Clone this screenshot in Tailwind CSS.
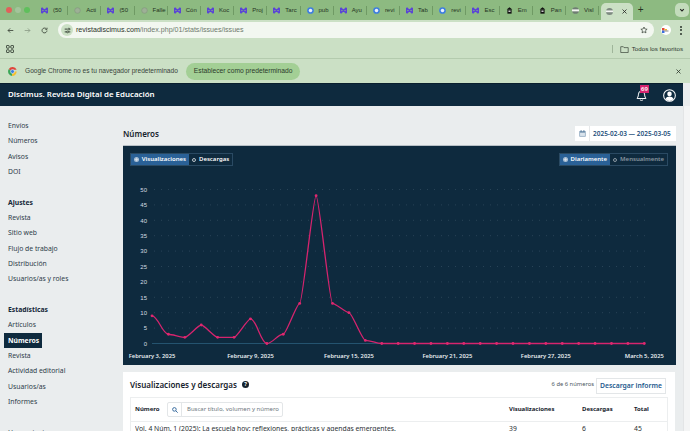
<!DOCTYPE html>
<html lang="es">
<head>
  <meta charset="UTF-8" />
  <title>Números</title>
  <script src="https://cdn.jsdelivr.net/npm/@tailwindcss/browser@4"></script>
</head>
<body class="w-[690px] h-[431px] overflow-hidden bg-[#eaedee] font-['Noto_Sans',sans-serif] text-[#1f2d3a]">

  <!-- Chrome tab strip -->
  <div class="h-[20px] bg-[#8dba81] flex items-center pl-[6px] relative">
    <div class="flex gap-[3px] w-[29px] shrink-0">
      <span class="w-[6px] h-[6px] rounded-full bg-[#e0605a]"></span>
      <span class="w-[6px] h-[6px] rounded-full bg-[#a3c49b]"></span>
      <span class="w-[6px] h-[6px] rounded-full bg-[#5fbf5c]"></span>
    </div>
    <div id="tabs" class="flex h-full items-center shrink-0"></div>
    <div class="w-[32px] h-[17px] mt-[3px] bg-[#cbe0c5] rounded-t-[5px] flex items-center justify-between pl-[5px] pr-[6px] ml-[1.500px] shrink-0">
      <svg class="w-[7px] h-[7px]" viewBox="0 0 10 10"><circle cx="5" cy="5" r="5" fill="#7d8a80"/><rect x="0" y="3.500" width="10" height="2.500" fill="#f4f6f3"/></svg>
      <svg class="w-[5px] h-[5px]" viewBox="0 0 10 10"><path d="M1 1l8 8M9 1l-8 8" stroke="#222" stroke-width="1.600"/></svg>
    </div>
    <span class="ml-[5px] text-[10px] leading-none text-[#26331f] font-['Liberation_Sans',sans-serif]">+</span>
    <div class="absolute right-[1px] top-[3px] w-[14px] h-[14px] rounded-[5px] bg-[#c3dcbc] flex items-center justify-center">
      <svg class="w-[6px] h-[6px]" viewBox="0 0 10 10"><path d="M2 3.500l3 3 3-3" fill="none" stroke="#222" stroke-width="1.800"/></svg>
    </div>
  </div>

  <!-- Toolbar -->
  <div class="h-[20px] bg-[#cbe0c5] flex items-center pl-[7px] pr-[8px] font-['Liberation_Sans',sans-serif]">
    <svg class="w-[7px] h-[7px] mr-[10px]" viewBox="0 0 10 10"><path d="M9 5H1.500M4.500 2l-3 3 3 3" fill="none" stroke="#3a4438" stroke-width="1.200"/></svg>
    <svg class="w-[7px] h-[7px] mr-[10px]" viewBox="0 0 10 10"><path d="M1 5h7.500M5.500 2l3 3-3 3" fill="none" stroke="#8b9c87" stroke-width="1.200"/></svg>
    <svg class="w-[7px] h-[7px] mr-[10px]" viewBox="0 0 10 10"><path d="M8.500 5A3.500 3.500 0 1 1 7.400 2.400M8.600 1v2.400H6.200" fill="none" stroke="#3a4438" stroke-width="1.200"/></svg>
    <div class="w-[246px] flex-1 h-[16px] rounded-full bg-[#f2f7f0] flex items-center pl-[3px] pr-[6px] text-[7.100px]">
      <span class="w-[12px] h-[12px] rounded-full bg-[#cbe0c5] flex items-center justify-center mr-[3px]">
        <svg class="w-[7px] h-[7px]" viewBox="0 0 10 10"><path d="M1 3h4M1 7h3M8 3h1M6 7h3" stroke="#2b352b" stroke-width="1.300"/><circle cx="7" cy="3" r="1.300" fill="none" stroke="#2b352b"/><circle cx="5" cy="7" r="1.300" fill="none" stroke="#2b352b"/></svg>
      </span>
      <span class="text-[#2a3329]">revistadiscimus.com</span><span class="text-[#6f7a6e]">/index.php/01/stats/issues/issues</span>
      <svg class="w-[8px] h-[8px] ml-auto" viewBox="0 0 24 24"><path d="M12 3l2.800 6 6.600.7-4.900 4.400 1.400 6.500L12 17.300l-5.900 3.300 1.400-6.500L2.600 9.700 9.200 9z" fill="none" stroke="#2b352b" stroke-width="2"/></svg>
    </div>
    <span class="ml-[7px] w-[10px] h-[10px] rounded-full bg-white flex items-center justify-center">
      <svg class="w-[8px] h-[5px]" viewBox="0 0 16 10"><rect width="5" height="5" fill="#e0453a"/><rect y="5" width="5" height="5" fill="#3b6fe0"/><rect x="5" y="2" width="5" height="3" fill="#f2b233"/><rect x="5" y="5" width="8" height="2" fill="#888"/></svg>
    </span>
    <span class="ml-[9px] flex flex-col gap-[1.500px]">
      <i class="block w-[2px] h-[2px] rounded-full bg-[#2b352b]"></i>
      <i class="block w-[2px] h-[2px] rounded-full bg-[#2b352b]"></i>
      <i class="block w-[2px] h-[2px] rounded-full bg-[#2b352b]"></i>
    </span>
  </div>

  <!-- Bookmarks bar -->
  <div class="h-[19px] bg-[#cbe0c5] border-b border-[#b4cbae] flex items-center pl-[6px] pr-[7px] font-['Liberation_Sans',sans-serif] text-[#2d362c]">
    <svg class="w-[8px] h-[8px]" viewBox="0 0 10 10"><g fill="none" stroke="#2b352b" stroke-width="1.100"><rect x=".6" y=".6" width="3.400" height="3.400" rx=".8"/><rect x="6" y=".6" width="3.400" height="3.400" rx=".8"/><rect x=".6" y="6" width="3.400" height="3.400" rx=".8"/><rect x="6" y="6" width="3.400" height="3.400" rx=".8"/></g></svg>
    <span class="ml-auto w-px h-[8px] bg-[#9fb59a] mr-[7px]"></span>
    <svg class="w-[9px] h-[7px] mr-[3px]" viewBox="0 0 12 10"><path d="M.6 1h3.700l1 1.300h6v7H.6z" fill="none" stroke="#2b352b" stroke-width=".9"/></svg>
    <span class="text-[6.200px]">Todos los favoritos</span>
  </div>

  <!-- Default browser infobar -->
  <div class="h-[24px] bg-[#cbe0c5] flex items-center pl-[8px] pr-[9px] font-['Liberation_Sans',sans-serif] text-[#38433a]">
    <svg class="w-[9px] h-[9px] mr-[8px]" viewBox="0 0 20 20">
      <path d="M10 10L1.500 5.200A10 10 0 0 1 19.300 6H10z" fill="#e0453a"/>
      <path d="M10 10l-8.500-4.800A10 10 0 0 0 9 20z" fill="#3aa757"/>
      <path d="M10 10h9.300A10 10 0 0 1 9 20z" fill="#f5c02e"/>
      <circle cx="10" cy="10" r="4.300" fill="#3a7ee0" stroke="#fff" stroke-width="1.200"/>
    </svg>
    <span class="text-[6.600px]">Google Chrome no es tu navegador predeterminado</span>
    <span class="ml-[8px] h-[17px] px-[8px] rounded-full bg-[#a3cf95] flex items-center text-[6.700px] text-[#2c3a2a]">Establecer como predeterminado</span>
    <svg class="w-[5px] h-[5px] ml-auto" viewBox="0 0 10 10"><path d="M1 1l8 8M9 1l-8 8" stroke="#2b352b" stroke-width="1.600"/></svg>
  </div>

  <!-- App header -->
  <header class="h-[23px] bg-[#0e2a3e] border-t border-[#0a1f2e] flex items-center pl-[8px] pr-[7px] mr-[7px] text-white">
    <span class="text-[7.900px] font-semibold">Discimus. Revista Digital de Educación</span>
    <span class="ml-auto relative w-[12px] h-[12px] mr-[15px]">
      <svg class="w-[11px] h-[11px] absolute left-0 top-[1px]" viewBox="0 0 20 20"><path d="M10 2a5.500 5.500 0 0 0-5.500 5.500c0 5-2.500 7-2.500 8h16c0-1-2.500-3-2.500-8A5.500 5.500 0 0 0 10 2zM8 17.500a2 2 0 0 0 4 0" fill="none" stroke="#fff" stroke-width="1.800"/></svg>
      <span class="absolute left-[4px] top-[-4px] w-[9px] h-[8px] bg-[#d6246e] text-[6px] leading-[8px] text-center font-semibold">69</span>
    </span>
    <svg class="w-[13px] h-[13px]" viewBox="0 0 20 20"><circle cx="10" cy="10" r="9" fill="none" stroke="#fff" stroke-width="1.600"/><circle cx="10" cy="7.500" r="3.500" fill="#fff"/><path d="M3.800 15.500c1.500-3 3.500-4 6.200-4s4.700 1 6.200 4A8.500 8.500 0 0 1 10 18.500a8.500 8.500 0 0 1-6.200-3z" fill="#fff"/></svg>
  </header>

  <div class="flex h-[325px] overflow-hidden">
    <!-- Sidebar -->
    <nav class="w-[123px] shrink-0 pt-[12px] text-[6.800px] leading-[15.330px] text-[#2d3c49]">
      <ul class="pl-[8px]">
        <li>Envíos</li><li>Números</li><li>Avisos</li><li>DOI</li>
      </ul>
      <ul class="pl-[8px] mt-[15.330px]">
        <li class="font-bold text-[#16293a]">Ajustes</li>
        <li>Revista</li><li>Sitio web</li><li>Flujo de trabajo</li><li>Distribución</li><li>Usuarios/as y roles</li>
      </ul>
      <ul class="pl-[8px] mt-[15.330px]">
        <li class="font-bold text-[#16293a]">Estadísticas</li>
        <li>Artículos</li>
        <li class="relative font-bold text-white"><span class="absolute left-[-4px] top-0 w-[38px] h-[15.330px] bg-[#0e2a3e]"></span><span class="relative">Números</span></li>
        <li>Revista</li><li>Actividad editorial</li><li>Usuarios/as</li><li>Informes</li>
      </ul>
      <ul class="pl-[8px] mt-[15.330px]"><li>Herramientas</li></ul>
    </nav>

    <!-- Main column -->
    <main class="w-[553px] shrink-0">
      <div class="h-[39px] flex items-end justify-between pb-[4px]">
        <h1 class="text-[8px] leading-[15px] font-semibold text-[#16222c]">Números</h1>
        <div class="h-[15px] w-[101px] bg-white flex items-center">
          <span class="w-[15px] h-full shrink-0 border-r border-[#e6e8ea] flex items-center justify-center">
            <svg class="w-[7px] h-[7px]" viewBox="0 0 10 10"><rect x=".5" y="1.500" width="9" height="8" fill="#7f9cb6"/><rect x="1.500" y="4" width="7" height="4.500" fill="#d9e3ec"/><path d="M3 0v2.500M7 0v2.500" stroke="#34618b"/></svg>
          </span>
          <span class="pl-[3px] text-[6.500px] font-semibold text-[#1e4f7b] whitespace-nowrap">2025-02-03 — 2025-03-05</span>
        </div>
      </div>

      <!-- Chart panel -->
      <section class="w-[553px] h-[220px] bg-[#0e2a3e] relative border-t border-white/70">
        <div class="flex justify-between pt-[7px] px-[7px] text-[6px] font-semibold">
          <div class="flex h-[13px] border border-[#2a4a63]">
            <span class="bg-[#2a6197] text-white flex items-center px-[3px] gap-[3px] w-[58px]"><i class="w-[3px] h-[3px] mx-[1px] rounded-full bg-white/80 ring-1 ring-white/60"></i>Visualizaciones</span>
            <span class="text-white flex items-center px-[3px] gap-[3px]"><i class="w-[4px] h-[4px] rounded-full border border-white/70"></i>Descargas</span>
          </div>
          <div class="flex h-[13px] border border-[#2a4a63] mr-[1px]">
            <span class="bg-[#2a6197] text-white flex items-center px-[3px] gap-[3px] w-[50px]"><i class="w-[3px] h-[3px] mx-[1px] rounded-full bg-white/80 ring-1 ring-white/60"></i>Diariamente</span>
            <span class="text-white/50 flex items-center px-[3px] gap-[3px]"><i class="w-[4px] h-[4px] rounded-full border border-white/50"></i>Mensualmente</span>
          </div>
        </div>
        <svg id="chart" class="absolute left-0 top-0" width="553" height="220" viewBox="0 0 553 220"></svg>
      </section>

      <!-- Table card -->
      <section class="w-[552px] mt-[7px] bg-white h-[60px] px-[7px]">
        <div class="h-[25px] flex items-center">
          <h2 class="text-[8px] font-semibold text-[#16222c]">Visualizaciones y descargas</h2>
          <span class="ml-[5px] w-[7px] h-[7px] rounded-full bg-[#16222c] text-white text-[5.500px] leading-[7px] text-center font-bold">?</span>
          <span class="ml-auto text-[5.800px] text-[#4a5560]">6 de 6 números</span>
          <span class="ml-[2px] h-[16px] mr-[2px] mt-[3px] w-[70px] justify-center border border-[#e3e6e8] flex items-center text-[6.800px] font-semibold text-[#1e5a8e] whitespace-nowrap">Descargar informe</span>
        </div>
        <div class="border border-[#eceeef] h-[60px]">
          <div class="h-[24px] border-b border-[#eceeef] flex items-center pl-[4px] text-[6px] font-bold text-[#16222c]">
            <span class="w-[32px]">Número</span>
            <div class="h-[15px] w-[116px] border border-[#e3e6e8] rounded-[2px] flex items-center font-normal text-[6px] text-[#6d7780] whitespace-nowrap">
              <span class="w-[14px] h-full shrink-0 border-r border-[#e3e6e8] flex items-center justify-center">
                <svg class="w-[6px] h-[6px]" viewBox="0 0 10 10"><circle cx="4" cy="4" r="3" fill="none" stroke="#2a6197" stroke-width="1.500"/><path d="M6.500 6.500L9.500 9.500" stroke="#2a6197" stroke-width="1.500"/></svg>
              </span>
              <span class="pl-[5px]">Buscar título, volumen y número</span>
            </div>
            <span class="ml-[226px] w-[73px]">Visualizaciones</span>
            <span class="w-[52px]">Descargas</span>
            <span>Total</span>
          </div>
          <div class="flex pl-[4px] pt-[1px] text-[6.800px] leading-[12px] text-[#2a2f33]">
            <span class="w-[374px] whitespace-nowrap overflow-hidden">Vol. 4 Núm. 1 (2025): La escuela hoy: reflexiones, prácticas y agendas emergentes.</span>
            <span class="w-[73px]">39</span>
            <span class="w-[52px]">6</span>
            <span>45</span>
          </div>
        </div>
      </section>
    </main>

    <!-- Scrollbar gutter -->
    <div class="flex-1 bg-[#f4f5f5] border-l border-[#e3e5e6] ml-[7px]"></div>
  </div>

  <script>
    // tab strip: [favicon, label]
    const tabs = [['m','(50'],['g','Acti'],['m','(50'],['g','Falle'],['m','Cón'],['m','Koc'],['m','Proj'],['m','Tarc'],['b','pub'],['m','Ayu'],['b','revi'],['m','Tab'],['b','revi'],['m','Esc'],['k','Em'],['k','Pan'],['v','Visl']];
    const icons = {
      m: '<path d="M1 1v8M9 1v8M1 1l8 8M9 1L1 9" stroke="#5a45d6" stroke-width="2" fill="none"/>',
      g: '<circle cx="5" cy="5" r="4" fill="#9db096" stroke="#85987f"/>',
      b: '<circle cx="5" cy="5" r="4.800" fill="#3f7fe0"/><circle cx="5" cy="5" r="2.500" fill="#e8f0fb"/>',
      k: '<path d="M5 .5L9 3.500H1z" fill="#111"/><rect x="2" y="3.500" width="6" height="6" fill="#111"/><rect x="3.500" y="5" width="3" height="2" fill="#ddd"/>',
      v: '<circle cx="5" cy="5" r="4.800" fill="#6f7d73"/><rect y="3.400" width="10" height="2.800" fill="#f2f5f0"/>'
    };
    document.getElementById('tabs').innerHTML = tabs.map(t => `
      <div class="w-[33.200px] h-[9px] shrink-0 flex items-center gap-[5px] pl-[6px] border-r border-[#6f9a64] text-[6px] text-[#25331f] font-['Liberation_Sans',sans-serif] overflow-hidden whitespace-nowrap">
        <svg class="w-[7px] h-[7px] shrink-0" viewBox="0 0 10 10">${icons[t[0]]}</svg>${t[1]}
      </div>`).join('');

    // chart: coordinates are relative to the panel
    const data = [9,3,2,6,2,2,8,0,3,13,48,13,10,1,0,0,0,0,0,0,0,0,0,0,0,0,0,0,0,0,0];
    const px = i => 29 + i * 16.41;
    const py = v => 197.500 - v * 3.080;
    let s = '';
    for (let v = 0; v <= 50; v += 5) {
      s += `<text x="24" y="${py(v) + 2.200}" text-anchor="end" font-size="6" fill="#d5dde2" font-family="Liberation Sans">${v}</text>`;
      if (v > 0) s += `<line x1="31" x2="522" y1="${py(v)}" y2="${py(v)}" stroke="#3a5468" stroke-width=".6" stroke-dasharray="1 6"/>`;
    }
    s += `<line x1="29" x2="522" y1="197.500" y2="197.500" stroke="#24536f" stroke-width="1.200"/>`;
    // smoothed line through the points, flat tangents so it never dips below zero
    let d = `M${px(0)} ${py(data[0])}`;
    for (let i = 1; i < data.length; i++) {
      const a = data[i - 1], b = data[i];
      const bend = (i === 1 || a === 0 || b === 0) ? 6 : 3;
      d += ` C${px(i - 1) + bend} ${py(a)} ${px(i) - bend} ${py(b)} ${px(i)} ${py(b)}`;
    }
    s += `<path d="${d}" fill="none" stroke="#d6246e" stroke-width="1.300"/>`;
    data.forEach((v, i) => { s += `<circle cx="${px(i)}" cy="${py(v)}" r="1.400" fill="#e0286f"/>`; });
    [[0,'February 3, 2025'],[6,'February 9, 2025'],[12,'February 15, 2025'],[18,'February 21, 2025'],[24,'February 27, 2025'],[30,'March 5, 2025']].forEach(l => {
      s += `<text x="${px(l[0])}" y="211.500" text-anchor="middle" font-size="5.800" font-weight="600" fill="#e8edf0" font-family="Noto Sans">${l[1]}</text>`;
    });
    document.getElementById('chart').innerHTML = s;
  </script>
</body>
</html>
